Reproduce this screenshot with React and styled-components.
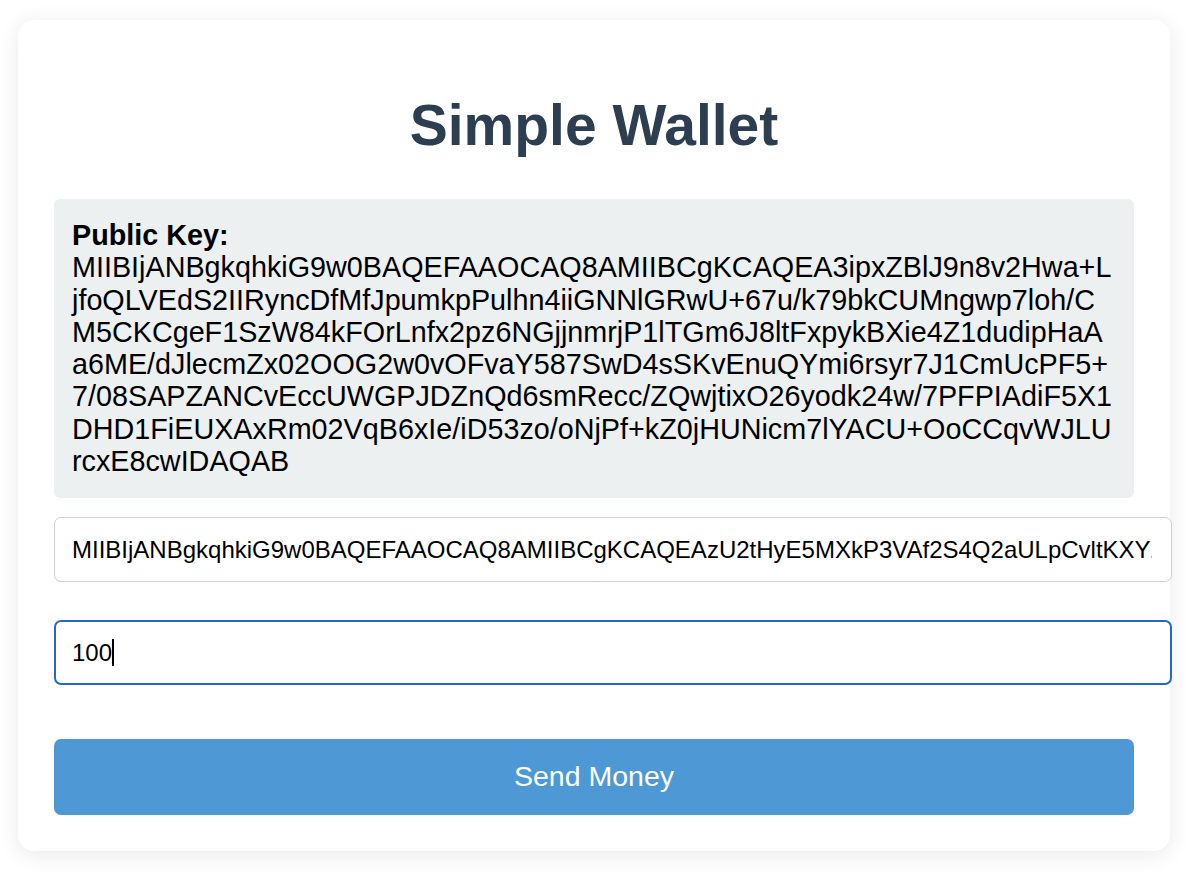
import React from "react";
import styled, { createGlobalStyle } from "styled-components";

const GlobalStyle = createGlobalStyle`
  html, body {
    margin: 0;
    padding: 0;
    background: #ffffff;
  }
  body {
    font-family: "Liberation Sans", Arial, Helvetica, sans-serif;
    color: #000;
  }
  * { box-sizing: content-box; }
`;

const Page = styled.div`
  padding: 20px 20px 27px 18px;
`;

const Card = styled.div`
  background: #ffffff;
  border-radius: 16px;
  padding: 36px;
  box-shadow: 0 4px 22px rgba(0, 0, 0, 0.09);
  display: flex;
  flex-direction: column;
`;

const Title = styled.h1`
  margin: 36px 0 41px;
  text-align: center;
  font-size: 57px;
  font-weight: 700;
  line-height: normal;
  color: #2c3e50;
`;

const KeyBox = styled.div`
  background: #ecf0f1;
  border-radius: 6px;
  padding: 20px 18px 21px;
  font-size: 28.75px;
  line-height: 32.3px;
  word-break: break-all;
  color: #000;
`;

const KeyLabel = styled.strong`
  display: block;
  font-weight: 700;
`;

const FieldWrap = styled.div`
  position: relative;
  margin-top: ${(p) => p.$gap}px;
`;

const Field = styled.input`
  display: block;
  width: 100%;
  margin: 0;
  font-family: "Liberation Sans", Arial, Helvetica, sans-serif;
  font-size: 24px;
  line-height: 27px;
  color: #000;
  background: #fff;
  border: ${(p) => (p.$focused ? "2px solid #2468cc" : "1px solid #cfcfcf")};
  padding: ${(p) => (p.$focused ? "17px 18px 17px 16px" : "18px 19px 18px 17px")};
  border-radius: 7px;
  outline: none;
  caret-color: transparent;
`;

const Caret = styled.span`
  position: absolute;
  top: 19px;
  left: 58px;
  width: 1.5px;
  height: 27px;
  background: #000;
  pointer-events: none;
`;

const SendButton = styled.button`
  display: block;
  width: 100%;
  margin-top: 54px;
  padding: 21px 0 22px;
  border: none;
  border-radius: 7px;
  background: #4d98d5;
  color: #ffffff;
  font-family: "Liberation Sans", Arial, Helvetica, sans-serif;
  font-size: 28.5px;
  line-height: 33px;
  cursor: pointer;
`;

const PUBLIC_KEY =
  "MIIBIjANBgkqhkiG9w0BAQEFAAOCAQ8AMIIBCgKCAQEA3ipxZBlJ9n8v2Hwa+LjfoQLVEdS2IIRyncDfMfJpumkpPulhn4iiGNNlGRwU+67u/k79bkCUMngwp7loh/CM5CKCgeF1SzW84kFOrLnfx2pz6NGjjnmrjP1lTGm6J8ltFxpykBXie4Z1dudipHaAa6ME/dJlecmZx02OOG2w0vOFvaY587SwD4sSKvEnuQYmi6rsyr7J1CmUcPF5+7/08SAPZANCvEccUWGPJDZnQd6smRecc/ZQwjtixO26yodk24w/7PFPIAdiF5X1DHD1FiEUXAxRm02VqB6xIe/iD53zo/oNjPf+kZ0jHUNicm7lYACU+OoCCqvWJLUrcxE8cwIDAQAB";

const RECIPIENT =
  "MIIBIjANBgkqhkiG9w0BAQEFAAOCAQ8AMIIBCgKCAQEAzU2tHyE5MXkP3VAf2S4Q2aULpCvltKXY2hQ8nJ0wR5eTz7pLk3dVbUqs9mF1oG4xWcA6iN";

export default function App() {
  const [recipient, setRecipient] = React.useState(RECIPIENT);
  const [amount, setAmount] = React.useState("100");
  return (
    <>
      <GlobalStyle />
      <Page>
        <Card>
          <Title>Simple Wallet</Title>
          <KeyBox>
            <KeyLabel>Public Key:</KeyLabel>
            {PUBLIC_KEY}
          </KeyBox>
          <FieldWrap $gap={19}>
            <Field
              type="text"
              value={recipient}
              onChange={(e) => setRecipient(e.target.value)}
            />
          </FieldWrap>
          <FieldWrap $gap={38}>
            <Field
              $focused
              type="text"
              value={amount}
              onChange={(e) => setAmount(e.target.value)}
            />
            <Caret />
          </FieldWrap>
          <SendButton>Send Money</SendButton>
        </Card>
      </Page>
    </>
  );
}
